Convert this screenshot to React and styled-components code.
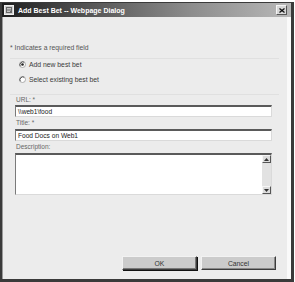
import React from "react";
import styled, { createGlobalStyle } from "styled-components";

const GlobalStyle = createGlobalStyle`
  html, body {
    margin: 0;
    padding: 0;
    background: #ffffff;
  }
  body {
    font-family: "Liberation Sans", "DejaVu Sans", sans-serif;
  }
`;

const Window = styled.div`
  box-sizing: border-box;
  width: 294px;
  height: 280px;
  margin-top: 2px;
  display: flex;
  flex-direction: column;
  background: #ececec;
  border: 1px solid #3a3a3a;
  border-left-width: 2px;
  border-right-width: 3px;
  border-bottom-width: 3px;
  box-shadow: inset -4px 0 0 #fafafa, inset 1px 0 0 #9a9a9a;
`;

const TitleBar = styled.div`
  height: 14px;
  display: flex;
  align-items: center;
  padding: 0 4px 0 2px;
  background: linear-gradient(to right, #1e1e1e 0%, #555 30%, #8c8c8c 65%, #b8b8b8 100%);
`;

const Title = styled.span`
  flex: 1;
  margin-left: 4px;
  color: #ffffff;
  font-size: 7px;
  font-weight: bold;
  white-space: nowrap;
`;

const CloseBtn = styled.div`
  width: 9px;
  height: 8px;
  display: flex;
  align-items: center;
  justify-content: center;
  background: #d8d8d8;
  border: 1px solid #f4f4f4;
  border-right-color: #555;
  border-bottom-color: #555;
`;

const Body = styled.div`
  flex: 1;
  display: flex;
  flex-direction: column;
  padding: 0 12px 0 8px;
`;

const Note = styled.div`
  margin-top: 26px;
  font-size: 6.8px;
  color: #555;
  line-height: 9px;
`;

const Rule = styled.div`
  height: 1px;
  background: #e0e0e0;
  margin-top: ${(p) => p.$top}px;
`;

const RadioList = styled.div`
  display: flex;
  flex-direction: column;
  gap: 6px;
  margin-top: 1px;
  padding-left: 9px;
`;

const RadioRow = styled.label`
  display: flex;
  align-items: center;
  gap: 3px;
  font-size: 6.8px;
  color: #3a3a3a;
  line-height: 9px;
`;

const Field = styled.div`
  display: flex;
  flex-direction: column;
  padding-left: 5px;
  margin-top: ${(p) => p.$top}px;
`;

const Label = styled.div`
  font-size: 6.5px;
  color: #666;
  line-height: 8px;
  height: 8px;
  padding-left: 1px;
  margin-top: ${(p) => p.$top || 0}px;
`;

const Input = styled.div`
  box-sizing: border-box;
  width: 257px;
  height: 12px;
  margin-top: ${(p) => p.$gap}px;
  background: #fff;
  border: 1px solid #dadada;
  border-top: 2px solid #5a5a5a;
  border-left-color: #7a7a7a;
  font-size: 6.6px;
  line-height: 9px;
  color: #222;
  padding-left: 2px;
  white-space: nowrap;
`;

const TextArea = styled.div`
  box-sizing: border-box;
  width: 257px;
  height: 42px;
  margin-top: 2px;
  display: flex;
  justify-content: flex-end;
  background: #fff;
  border: 1px solid #dadada;
  border-top: 2px solid #5a5a5a;
  border-left-color: #7a7a7a;
`;

const ScrollBar = styled.div`
  width: 9px;
  display: flex;
  flex-direction: column;
  justify-content: space-between;
  background: #e2e2e2;
`;

const ScrollBtn = styled.div`
  box-sizing: border-box;
  height: 8px;
  display: flex;
  align-items: center;
  justify-content: center;
  background: #dcdcdc;
  border: 1px solid #f6f6f6;
  border-right-color: #555;
  border-bottom-color: #555;
`;

const Footer = styled.div`
  margin-top: auto;
  margin-bottom: 9px;
  display: flex;
  justify-content: flex-end;
  gap: 4px;
  padding-right: 3px;
`;

const Button = styled.div`
  box-sizing: border-box;
  width: 75px;
  height: 14px;
  display: flex;
  align-items: center;
  justify-content: center;
  background: #cbcbcb;
  border: 1px solid #f2f2f2;
  border-right-color: #3c3c3c;
  border-bottom-color: #3c3c3c;
  box-shadow: ${(p) => (p.$primary ? "1px 1px 0 #111, inset -1px -1px 0 #777" : "inset -1px -1px 0 #888")};
  font-size: 6.8px;
  color: #333;
`;

const Radio = ({ checked }) => (
  <svg width="7" height="7" viewBox="0 0 7 7">
    <circle cx="3.5" cy="3.5" r="3" fill="#fff" stroke="#9a9a9a" strokeWidth="0.8" />
    <path d="M1.2 5.2 A3 3 0 0 1 5.2 1.2" fill="none" stroke="#444" strokeWidth="0.9" />
    {checked && <circle cx="3.5" cy="3.5" r="1.3" fill="#222" />}
  </svg>
);

const Arrow = ({ up }) => (
  <svg width="5" height="3" viewBox="0 0 5 3">
    <path d={up ? "M0 3 L2.5 0 L5 3 Z" : "M0 0 L2.5 3 L5 0 Z"} fill="#333" />
  </svg>
);

export default function App() {
  return (
    <>
      <GlobalStyle />
      <Window>
        <TitleBar>
          <svg width="10" height="10" viewBox="0 0 10 10">
            <rect x="0.5" y="0.5" width="9" height="9" fill="#cfcfcf" stroke="#f0f0f0" />
            <rect x="2" y="2" width="6" height="6" fill="#6a6a6a" />
            <path d="M3 3.5 H7 M3 5 H7 M3 6.5 H6" stroke="#eee" strokeWidth="0.7" />
          </svg>
          <Title>Add Best Bet -- Webpage Dialog</Title>
          <CloseBtn>
            <svg width="6" height="5" viewBox="0 0 6 5">
              <path d="M0.5 0.5 L5.5 4.5 M5.5 0.5 L0.5 4.5" stroke="#111" strokeWidth="1.3" />
            </svg>
          </CloseBtn>
        </TitleBar>
        <Body>
          <Note>* Indicates a required field</Note>
          <Rule $top={6} />
          <RadioList>
            <RadioRow>
              <Radio checked />
              Add new best bet
            </RadioRow>
            <RadioRow>
              <Radio />
              Select existing best bet
            </RadioRow>
          </RadioList>
          <Rule $top={10} />
          <Field $top={1}>
            <Label>URL: *</Label>
            <Input $gap={1}>\\web1\food</Input>
            <Label $top={2}>Title: *</Label>
            <Input $gap={2}>Food Docs on Web1</Input>
            <Label $top={2}>Description:</Label>
            <TextArea>
              <ScrollBar>
                <ScrollBtn>
                  <Arrow up />
                </ScrollBtn>
                <ScrollBtn>
                  <Arrow />
                </ScrollBtn>
              </ScrollBar>
            </TextArea>
          </Field>
          <Footer>
            <Button $primary>OK</Button>
            <Button>Cancel</Button>
          </Footer>
        </Body>
      </Window>
    </>
  );
}
